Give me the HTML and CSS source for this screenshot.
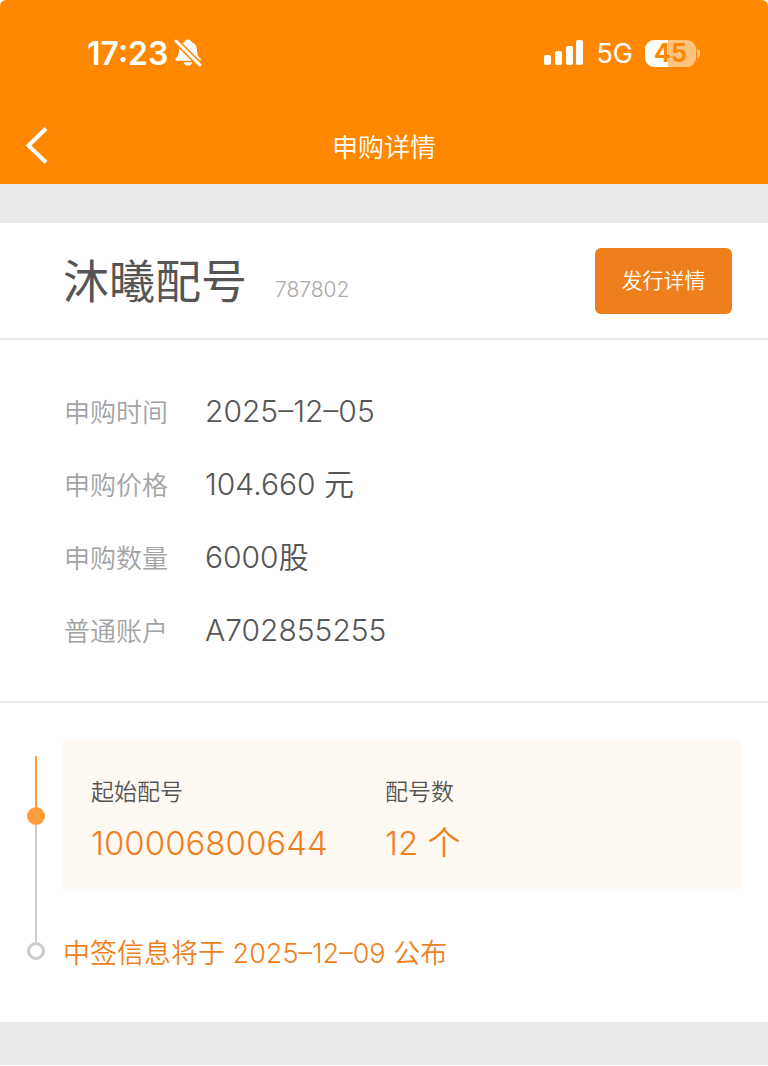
FILE: index.html
```
<!DOCTYPE html>
<html lang="zh-CN">
<head>
  <meta charset="UTF-8">
  <meta name="viewport" content="width=device-width, initial-scale=1.0">
  <title>申购详情</title>
  <link rel="stylesheet" href="styles.css">
</head>
<body>

  <header class="top">
    <!-- 状态栏 -->
    <div class="status">
      <div class="status-left">
        <span class="clock">17:23</span>
        <svg class="bell" width="28" height="30" viewBox="0 0 28 30" aria-hidden="true">
          <path fill="#fff" d="M14 1.500c-2 0-3.200 1.100-3.600 2.700C6.500 5.400 5 8.500 5 12c0 4.500-1 6.300-3.200 8.300-1 1-.6 2.500.9 2.500h22.600c1.500 0 1.900-1.500.9-2.500C24 18.300 23 16.500 23 12c0-3.500-1.500-6.600-5.400-7.800-.4-1.600-1.600-2.700-3.600-2.700zM9.800 24.300h8.400c-.4 2.100-2 3.500-4.200 3.500s-3.800-1.400-4.200-3.500z"/>
          <path stroke="#ff8800" stroke-width="6" d="M1 2l26 26"/>
          <path stroke="#fff" stroke-width="3" stroke-linecap="round" d="M2 3l24 24"/>
        </svg>
      </div>
      <div class="status-right">
        <svg width="40" height="26" viewBox="0 0 40 26" fill="#fff" aria-hidden="true">
          <rect x="0" y="15" width="7" height="10" rx="2"/>
          <rect x="11" y="11" width="7" height="14" rx="2"/>
          <rect x="22" y="6" width="7" height="19" rx="2"/>
          <rect x="32" y="0" width="7" height="25" rx="2"/>
        </svg>
        <span class="network">5G</span>
        <div class="battery"><span class="battery-level">45</span></div>
      </div>
    </div>

    <!-- 导航栏 -->
    <nav class="nav">
      <button class="back" type="button" aria-label="返回">
        <svg width="24" height="38" viewBox="0 0 24 38" aria-hidden="true">
          <path fill="none" stroke="#fff" stroke-width="4" d="M22 2.500L4.500 19.500 22 36.500"/>
        </svg>
      </button>
      <h1>申购详情</h1>
    </nav>
  </header>

  <main>
    <section class="stock">
      <h2>沐曦配号</h2>
      <span class="code">787802</span>
      <button class="issue-btn" type="button">发行详情</button>
    </section>

    <dl class="details">
      <div class="row"><dt>申购时间</dt><dd>2025–12–05</dd></div>
      <div class="row"><dt>申购价格</dt><dd>104.660 元</dd></div>
      <div class="row"><dt>申购数量</dt><dd>6000股</dd></div>
      <div class="row"><dt>普通账户</dt><dd>A702855255</dd></div>
    </dl>

    <!-- 配号进度 -->
    <ol class="timeline">
      <li class="step">
        <div class="rail">
          <span class="line line-done"></span>
          <span class="dot"></span>
          <span class="line"></span>
        </div>
        <div class="card">
          <div class="cell">
            <p class="cell-label">起始配号</p>
            <p class="cell-value">100006800644</p>
          </div>
          <div class="cell">
            <p class="cell-label">配号数</p>
            <p class="cell-value">12 个</p>
          </div>
        </div>
      </li>
      <li class="step">
        <span class="dot dot-empty"></span>
        <p class="notice">中签信息将于 2025–12–09 公布</p>
      </li>
    </ol>
  </main>

</body>
</html>
```
FILE: styles.css
```
* {
  box-sizing: border-box;
}

body {
  margin: 0;
  font-family: Inter, "Noto Sans CJK SC", sans-serif;
  font-weight: 350;
  color: #555;
  background-color: #fff;
}

h1, h2, p, dl, dd, ol {
  margin: 0;
  padding: 0;
  font-weight: inherit;
}

button {
  border: none;
  font: inherit;
  color: #fff;
  cursor: pointer;
}

.top {
  background-color: #ff8800;
  color: #fff;
  border-radius: 6px 6px 0 0;
}

/* Status bar */
.status {
  display: flex;
  justify-content: space-between;
  align-items: center;
  height: 106px;
  padding: 0 68px 0 87px;
}

.status-left,
.status-right {
  display: flex;
  align-items: center;
}

.status-left {
  gap: 6px;
}

.clock {
  font-size: 32px;
  font-weight: 600;
}

.network {
  margin: 0 12px;
  font-size: 27px;
  font-weight: 400;
}

.battery {
  display: flex;
  align-items: center;
}

.battery-level {
  width: 51px;
  border-radius: 9px;
  background: linear-gradient(90deg, #fff 45%, #ffc380 45%);
  color: #ff8800;
  font-size: 25px;
  font-weight: 700;
  line-height: 27px;
  text-align: center;
}

.battery::after {
  content: "";
  width: 3px;
  height: 9px;
  margin-left: 1px;
  border-radius: 0 3px 3px 0;
  background-color: #ffc380;
}

/* Nav bar */
.nav {
  display: grid;
  grid-template-columns: 48px 1fr 48px;
  align-items: center;
  height: 78px;
}

.back {
  display: flex;
  justify-content: flex-end;
  padding: 0;
  background: none;
}

.nav h1 {
  font-size: 26px;
  text-align: center;
}

main {
  border-top: 39px solid #eaeaea;
  border-bottom: 43px solid #eaeaea;
}

.stock {
  display: flex;
  align-items: center;
  padding: 25px 36px 24px 63px;
  border-bottom: 2px solid #ececec;
}

.stock h2 {
  font-size: 46px;
  font-weight: 400;
  line-height: 66px;
}

.code {
  margin-left: 28px;
  padding-top: 16px;
  font-size: 21px;
  color: #aaa;
}

.issue-btn {
  width: 137px;
  height: 66px;
  margin-left: auto;
  padding: 0 0 4px;
  border-radius: 6px;
  background-color: #ef7f1c;
  font-size: 21px;
}

.details {
  display: grid;
  gap: 23px;
  padding: 47px 36px 45px 64px;
  border-bottom: 2px solid #ececec;
}

.row {
  display: flex;
  align-items: baseline;
  line-height: 48px;
}

.row dt {
  width: 141px;
  font-size: 26px;
  color: #a3a3a3;
}

.row dd {
  font-size: 30px;
}

/* Timeline */
.timeline {
  padding: 36px 27px 56px;
  list-style: none;
}

.step {
  display: flex;
  gap: 18px;
}

.rail {
  display: flex;
  flex-direction: column;
  align-items: center;
  padding-top: 17px;
}

.line {
  flex: 1;
  width: 2px;
  background-color: #ccc;
}

.line-done {
  flex: none;
  height: 51px;
  background-color: #ff9c3c;
}

.dot {
  flex: none;
  width: 18px;
  height: 18px;
  border-radius: 50%;
  background-color: #ff9c3c;
}

.dot-empty {
  border: 3px solid #ccc;
  background-color: #fff;
}

.card {
  flex: 1;
  display: grid;
  grid-template-columns: 294px 1fr;
  margin-bottom: 53px;
  padding: 35px 28px 22px;
  background-color: #fff9f3;
}

.cell-label {
  font-size: 23px;
  line-height: 36px;
}

.cell-value {
  margin-top: 9px;
  font-size: 33px;
  line-height: 48px;
  color: #ef7f1c;
}

.notice {
  font-size: 27px;
  line-height: 24px;
  color: #ef7f1c;
}
```
